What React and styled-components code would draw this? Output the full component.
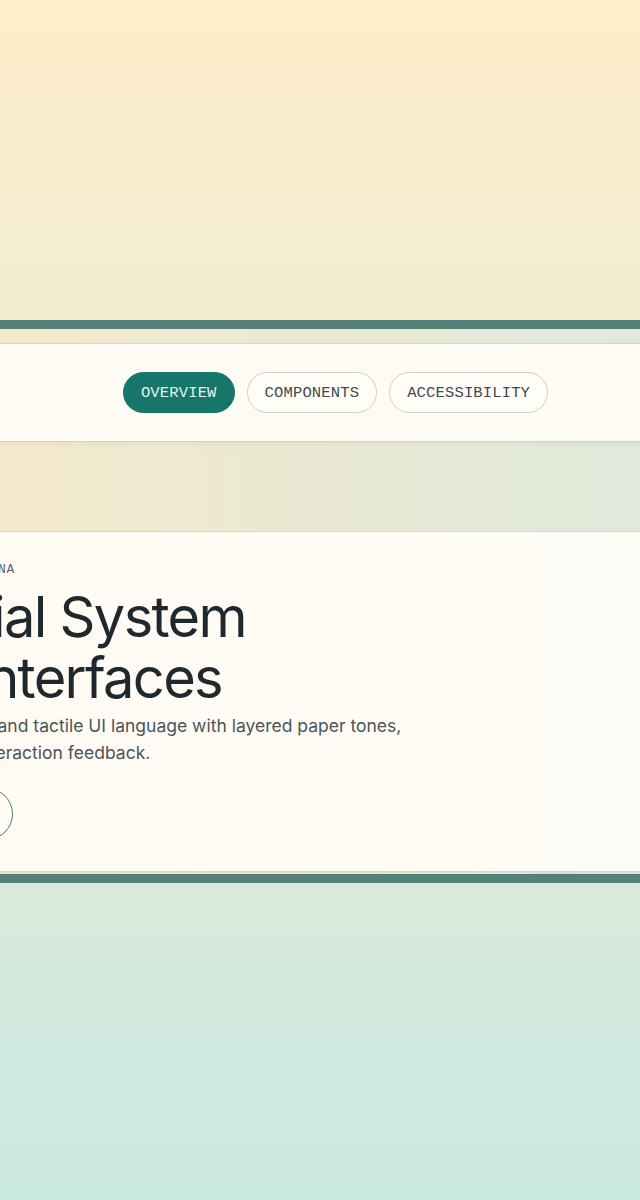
import React from "react";
import styled, { createGlobalStyle } from "styled-components";

const Global = createGlobalStyle`
  html, body { margin: 0; padding: 0; }
  body { font-family: Inter, "Noto Sans", sans-serif; overflow-x: hidden; }
  * { box-sizing: border-box; }
`;

const Page = styled.div`
  min-height: 1200px;
  overflow: hidden;
  padding-top: 320px;
  background: linear-gradient(180deg, #ffeeca 0%, #cae9e2 100%);
`;

const Shell = styled.section`
  width: 1067px;
  margin-left: -198px;
  display: flex;
  flex-direction: column;
  gap: 89px;
  padding: 14px 0 2px;
  border-top: 9px solid #55807a;
  border-bottom: 9px solid #55807a;
  background: linear-gradient(90deg, #fae9c8 0%, #d9e9e0 100%);
`;

const Header = styled.header`
  display: grid;
  grid-template-columns: 1fr auto 1fr;
  align-items: center;
  padding: 28px 44px;
  background: #fdfbf4;
  border-top: 1px solid #dbd5c7;
  border-bottom: 1px solid #d6d0c1;
  box-shadow: 0 2px 6px rgba(90, 80, 50, 0.06);
`;

const Brand = styled.div`
  display: flex;
  align-items: center;
  gap: 10px;
  font-family: Inter, sans-serif;
  font-weight: 600;
  font-size: 17px;
  color: #1f2a30;
`;

const Mark = styled.span`
  width: 28px;
  height: 28px;
  border-radius: 8px;
  background: #16766a;
`;

const Nav = styled.nav`
  display: flex;
  gap: 12px;
`;

const Pill = styled.button`
  height: 41px;
  padding: 0 17px;
  border-radius: 999px;
  font-family: "Liberation Mono", "DejaVu Sans Mono", monospace;
  font-size: 15.5px;
  letter-spacing: 0.01em;
  cursor: pointer;
  border: 1px solid ${(p) => (p.$active ? "#16766a" : "#d3cec2")};
  background: ${(p) => (p.$active ? "#16766a" : "#fffdf7")};
  color: ${(p) => (p.$active ? "#e2f3ec" : "#44494c")};
`;

const HeaderAction = styled.div`
  justify-self: end;
`;

const Ghost = styled.button`
  height: 41px;
  padding: 0 20px;
  border-radius: 999px;
  border: 1px solid #16766a;
  background: transparent;
  color: #16766a;
  font-family: Inter, sans-serif;
  font-size: 14px;
`;

const Card = styled.div`
  display: grid;
  grid-template-columns: 640px 1fr;
  padding: 29px 44px 31px;
  background: linear-gradient(90deg, #fffbf2 0%, #fffcf5 45%, #fdfcf7 100%);
  border-top: 1px solid #dbd5c6;
  border-bottom: 1px solid #ddd6c8;
  box-shadow: 0 2px 4px rgba(90, 80, 50, 0.06);
`;

const Copy = styled.div`
  display: flex;
  flex-direction: column;
  align-items: flex-start;
`;

const Eyebrow = styled.div`
  font-family: "Liberation Mono", "DejaVu Sans Mono", monospace;
  font-size: 13px;
  line-height: 18px;
  letter-spacing: 0.05em;
  color: #5d6366;
`;

const Title = styled.h1`
  margin: 8px 0 0;
  font-family: Inter, sans-serif;
  font-weight: 400;
  font-size: 56px;
  line-height: 61px;
  letter-spacing: -0.03em;
  color: #1e282e;
`;

const Lead = styled.p`
  margin: 3px 0 0;
  font-family: Inter, sans-serif;
  font-size: 17.5px;
  line-height: 27px;
  color: #4b5459;
`;

const Outline = styled.button`
  margin-top: 22px;
  height: 52px;
  padding: 0 30px;
  border-radius: 999px;
  border: 1.5px solid #4f7d76;
  background: transparent;
  color: #1f4f49;
  font-family: Inter, sans-serif;
  font-size: 15px;
`;

export default function App() {
  return (
    <>
      <Global />
      <Page>
        <Shell>
          <Header>
            <Brand>
              <Mark />
              Patina
            </Brand>
            <Nav>
              <Pill $active>OVERVIEW</Pill>
              <Pill>COMPONENTS</Pill>
              <Pill>ACCESSIBILITY</Pill>
            </Nav>
            <HeaderAction>
              <Ghost>Get started</Ghost>
            </HeaderAction>
          </Header>
          <Card>
            <Copy>
              <Eyebrow>MATERIAL UI · PATINA</Eyebrow>
              <Title>
                Material System
                <br />
                Kind Interfaces
              </Title>
              <Lead>
                A soft, material-lit and tactile UI language with layered paper tones,
                <br />
                depth and fluid interaction feedback.
              </Lead>
              <Outline>View the guide</Outline>
            </Copy>
          </Card>
        </Shell>
      </Page>
    </>
  );
}
